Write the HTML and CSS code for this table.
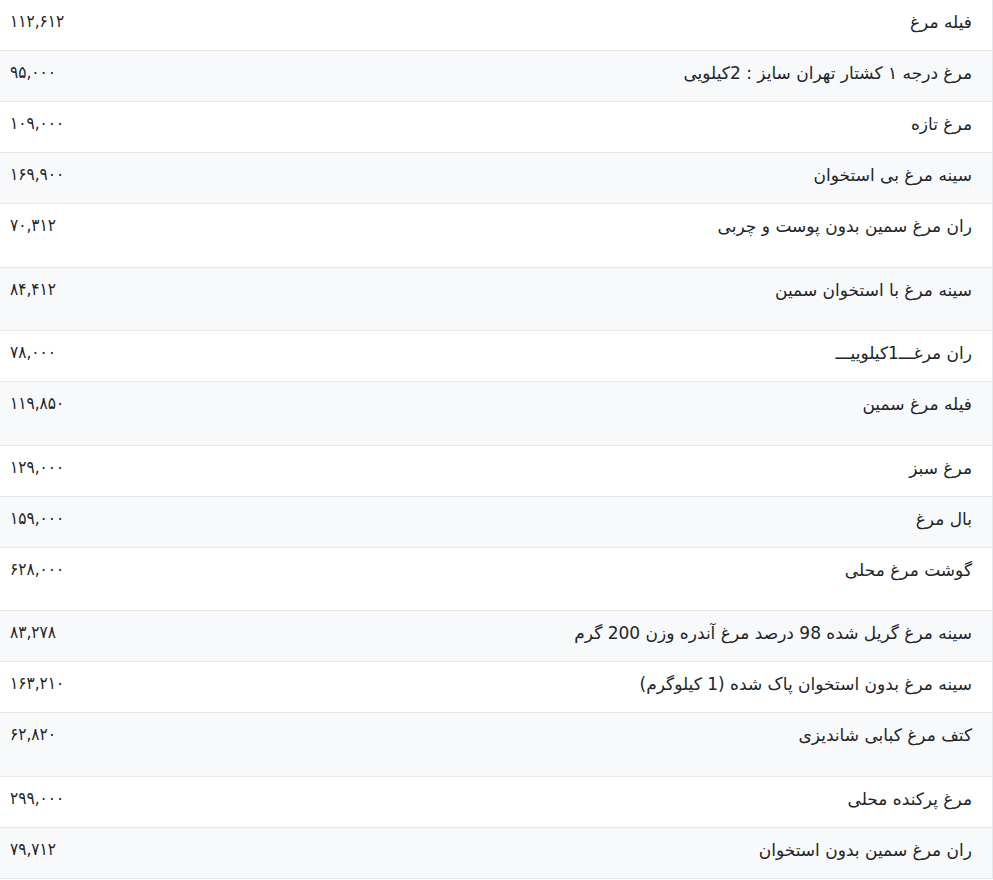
FILE: index.html
```html
<!DOCTYPE html>
<html lang="fa" dir="rtl">
<head>
<meta charset="utf-8">
<link rel="stylesheet" href="styles.css">
</head>
<body>
<div class="table">
  <div class="row"><div class="name">فیله مرغ</div><div class="price">۱۱۲,۶۱۲</div></div>
  <div class="row"><div class="name">مرغ درجه ۱ کشتار تهران سایز : 2کیلویی</div><div class="price">۹۵,۰۰۰</div></div>
  <div class="row"><div class="name">مرغ تازه</div><div class="price">۱۰۹,۰۰۰</div></div>
  <div class="row"><div class="name">سینه مرغ بی استخوان</div><div class="price">۱۶۹,۹۰۰</div></div>
  <div class="row tall"><div class="name">ران مرغ سمین بدون پوست و چربی</div><div class="price">۷۰,۳۱۲</div></div>
  <div class="row tall"><div class="name">سینه مرغ با استخوان سمین</div><div class="price">۸۴,۴۱۲</div></div>
  <div class="row"><div class="name">ران مرغـــ1کیلوییـــ</div><div class="price">۷۸,۰۰۰</div></div>
  <div class="row tall"><div class="name">فیله مرغ سمین</div><div class="price">۱۱۹,۸۵۰</div></div>
  <div class="row"><div class="name">مرغ سبز</div><div class="price">۱۲۹,۰۰۰</div></div>
  <div class="row"><div class="name">بال مرغ</div><div class="price">۱۵۹,۰۰۰</div></div>
  <div class="row tall"><div class="name">گوشت مرغ محلی</div><div class="price">۶۲۸,۰۰۰</div></div>
  <div class="row"><div class="name">سینه مرغ گریل شده 98 درصد مرغ آندره وزن 200 گرم</div><div class="price">۸۳,۲۷۸</div></div>
  <div class="row"><div class="name">سینه مرغ بدون استخوان پاک شده (1 کیلوگرم)</div><div class="price">۱۶۳,۲۱۰</div></div>
  <div class="row tall"><div class="name">کتف مرغ کبابی شاندیزی</div><div class="price">۶۲,۸۲۰</div></div>
  <div class="row"><div class="name">مرغ پرکنده محلی</div><div class="price">۲۹۹,۰۰۰</div></div>
  <div class="row"><div class="name">ران مرغ سمین بدون استخوان</div><div class="price">۷۹,۷۱۲</div></div>
</div>
</body>
</html>
```
FILE: styles.css
```css
html, body {
  margin: 0;
  padding: 0;
  background: #ffffff;
}
body {
  font-family: "DejaVu Sans", "Noto Sans", sans-serif;
  color: #212529;
  font-size: 17px;
}
.table {
  width: 992px;
  border-right: 1px solid #e5e7eb;
  display: flex;
  flex-direction: column;
}
.row {
  display: flex;
  justify-content: space-between;
  align-items: flex-start;
  height: 51px;
  box-sizing: border-box;
  border-bottom: 1px solid #e5e7eb;
  padding: 9px 20px 0 10px;
  line-height: 26px;
}
.row:nth-child(even) {
  background: #f8f9fa;
}
.row.tall {
  height: 63.5px;
}
.name {
  white-space: nowrap;
}
.price {
  white-space: nowrap;
  direction: ltr;
  font-family: "DejaVu Sans Condensed", "DejaVu Sans", sans-serif;
  font-size: 17px;
  font-weight: 500;
  line-height: 24px;
}
```
